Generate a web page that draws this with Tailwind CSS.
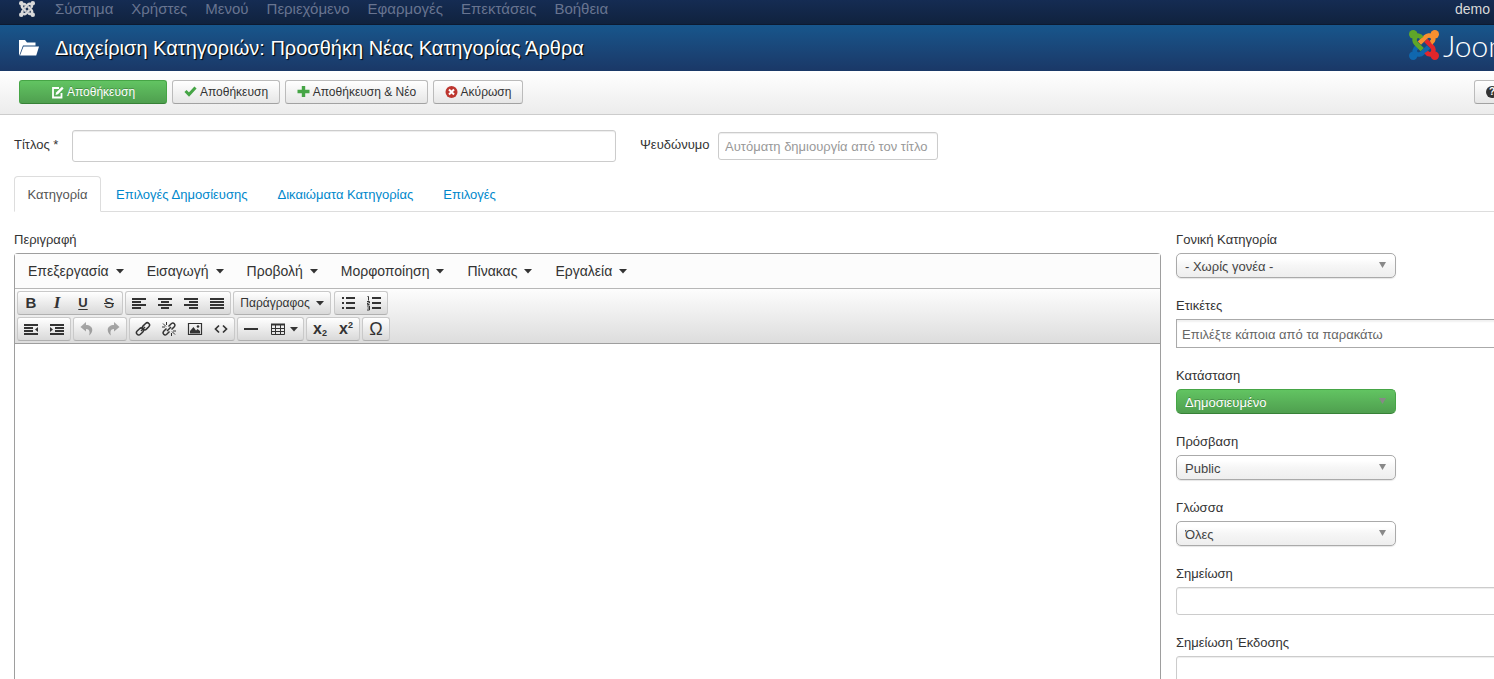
<!DOCTYPE html>
<html lang="el">
<head>
<meta charset="utf-8">
<meta name="viewport" content="width=device-width, initial-scale=1">
<title>Διαχείριση Κατηγοριών</title>
<script src="https://cdn.jsdelivr.net/npm/@tailwindcss/browser@4"></script>
</head>
<body class="min-h-screen flex flex-col overflow-hidden bg-white font-['Liberation_Sans',Arial,sans-serif] text-[13px] leading-5 text-[#333]">
<svg class="hidden" aria-hidden="true">
  <defs>
    <g id="arm"><circle cx="4.2" cy="4.2" r="4.2"/><path d="M12.800 8C11 5.200 8 5 6.400 7C5 9 5.400 11.800 7 13.400L13.200 19.600" fill="none" stroke="currentColor" stroke-width="4.600"/></g>
    <path id="caret" d="M0 0h8L4 4.500z" fill="#333"/>
    <path id="down" d="M0 0h7L3.500 6z" fill="#888"/>
  </defs>
</svg>

<nav class="flex h-[25px] shrink-0 items-start border-b border-[#0d1a30] bg-linear-to-b from-[#152c53] to-[#10223e] pl-[19px] pr-1 text-[15px] leading-[18px] text-[#687490]">
  <a href="#" aria-label="Joomla" class="mr-5 pt-px"><svg class="size-4 text-[#d9d9d9]" viewBox="0 0 30 30" fill="currentColor"><use href="#arm"/><use href="#arm" transform="rotate(90 15 15)"/><use href="#arm" transform="rotate(180 15 15)"/><use href="#arm" transform="rotate(270 15 15)"/></svg></a>
  <div class="flex gap-[18px]">
    <a href="#">Σύστημα</a><a href="#">Χρήστες</a><a href="#">Μενού</a><a href="#">Περιεχόμενο</a><a href="#">Εφαρμογές</a><a href="#">Επεκτάσεις</a><a href="#">Βοήθεια</a>
  </div>
  <a href="#" class="ml-auto text-[14px] text-[#d9d9d9]">demo</a>
</nav>

<header class="flex h-[46px] shrink-0 items-center bg-linear-to-b from-[#17568c] to-[#1a3867] pl-[19px] text-white">
  <svg class="mr-4 h-[17px] w-5" viewBox="0 0 20 17" fill="#fff"><path d="M0 0h6l2 2.500h8.500V5.500H4L1.200 13 0 16z"/><path d="M4.500 6.500H20L17.200 15.500H1z"/></svg>
  <h1 class="text-[20px] leading-6 [text-shadow:1px_1px_1px_#000]">Διαχείριση Κατηγοριών: Προσθήκη Νέας Κατηγορίας Άρθρα</h1>
  <a href="#" class="ml-auto flex w-[85px] items-center overflow-hidden pb-1.5" aria-label="Joomla!">
    <svg class="mr-1 size-[30px] shrink-0" viewBox="0 0 30 30">
      <g class="text-[#1067ae]" fill="currentColor" transform="rotate(270 15 15)"><use href="#arm"/></g>
      <g class="text-[#e3262b]" fill="currentColor" transform="rotate(180 15 15)"><use href="#arm"/></g>
      <g class="text-[#f9902f]" fill="currentColor" transform="rotate(90 15 15)"><use href="#arm"/></g>
      <g class="text-[#5fa629]" fill="currentColor"><use href="#arm"/></g>
    </svg>
    <span class="font-['Lato',sans-serif] text-[30px] leading-7 font-light">Joomla!</span>
  </a>
</header>

<div class="flex h-11 shrink-0 items-start gap-[5px] overflow-hidden border-b border-[#ccc] bg-linear-to-b from-white to-[#ececec] pt-[9px] pl-[19px] text-[12px]">
  <button class="flex h-6 w-[148px] items-center justify-center gap-[3px] rounded-[3px] border border-[#46a546] border-b-[#378137] bg-linear-to-b from-[#62c462] to-[#4f9f4f] text-white [text-shadow:0_-1px_0_rgba(0,0,0,.25)]"><svg class="size-[13px]" viewBox="0 0 13 13" fill="none" stroke="#fff" stroke-width="1.800"><path d="M8 2H2v9.500h8.500V7"/><path d="M4.500 9l.6-2.500L11 .8 12.600 2.400 7 8.200z" fill="#fff" stroke="none"/></svg>Αποθήκευση</button>
  <button class="flex h-6 w-[108px] items-center justify-center gap-[3px] rounded-[3px] border border-[#bbb] border-b-[#a2a2a2] bg-linear-to-b from-white to-[#e6e6e6]"><svg class="size-[13px]" viewBox="0 0 13 13" fill="none" stroke="#46a546" stroke-width="3"><path d="M1.500 5l3.500 3.500 6.500-7"/></svg>Αποθήκευση</button>
  <button class="flex h-6 w-[143px] items-center justify-center gap-[3px] rounded-[3px] border border-[#bbb] border-b-[#a2a2a2] bg-linear-to-b from-white to-[#e6e6e6]"><svg class="size-[13px]" viewBox="0 0 13 13" stroke="#46a546" stroke-width="3.400"><path d="M6.500 0v11M.5 5.500h12"/></svg>Αποθήκευση &amp; Νέο</button>
  <button class="flex h-6 w-[90px] items-center justify-center gap-[3px] rounded-[3px] border border-[#bbb] border-b-[#a2a2a2] bg-linear-to-b from-white to-[#e6e6e6]"><svg class="size-[13px]" viewBox="0 0 13 13"><circle cx="6.500" cy="6" r="6" fill="#bd362f"/><path d="M4 3.500l5 5M9 3.500l-5 5" stroke="#fff" stroke-width="2"/></svg>Ακύρωση</button>
  <button class="-mr-10 ml-auto flex h-6 w-[60px] items-center rounded-[3px] border border-[#bbb] border-b-[#a2a2a2] bg-linear-to-b from-white to-[#e6e6e6] pl-[11px]" aria-label="Βοήθεια"><span class="flex size-3 items-center justify-center rounded-full bg-[#333] text-[10px] leading-3 font-bold text-white">?</span></button>
</div>

<main class="flex grow flex-col px-[14px]">
  <div class="flex items-center pt-[15px]">
    <label for="title" class="w-[58px] pb-0.5">Τίτλος *</label>
    <input id="title" class="h-8 w-[544px] rounded-[3px] border border-[#ccc] px-2 shadow-[inset_0_1px_1px_rgba(0,0,0,.075)]">
    <label for="alias" class="ml-6 w-[78px] pb-0.5">Ψευδώνυμο</label>
    <input id="alias" placeholder="Αυτόματη δημιουργία από τον τίτλο" class="h-7 w-[220px] rounded-[3px] border border-[#ccc] px-1.5 shadow-[inset_0_1px_1px_rgba(0,0,0,.075)] placeholder:text-[#999]">
  </div>

  <div class="-mr-[14px] mt-[14px] flex h-9 shrink-0 border-b border-[#ddd] text-[#0088cc]" role="tablist">
    <button role="tab" aria-selected="true" class="-mb-px w-[87px] rounded-t border border-[#ddd] border-b-white bg-white pt-0.5 text-[#555]">Κατηγορία</button>
    <button role="tab" class="ml-[15px] pt-0.5">Επιλογές Δημοσίευσης</button>
    <button role="tab" class="ml-[30px] pt-0.5">Δικαιώματα Κατηγορίας</button>
    <button role="tab" class="ml-[30px] pt-0.5">Επιλογές</button>
  </div>

  <div class="flex grow gap-[15px] pt-[18px]">
    <section class="flex min-w-0 grow flex-col">
      <label for="editor" class="mb-[3px]">Περιγραφή</label>
      <div class="flex grow flex-col border border-b-0 border-[#9e9e9e] rounded-t-sm">
        <div class="flex h-[35px] items-center gap-[23px] border-b border-[#b7b7b7] bg-[#fcfcfc] pl-[13px] text-[14px]">
          <button class="flex items-center gap-[7px]">Επεξεργασία<svg class="h-[5px] w-2"><use href="#caret"/></svg></button>
          <button class="flex items-center gap-[7px]">Εισαγωγή<svg class="h-[5px] w-2"><use href="#caret"/></svg></button>
          <button class="flex items-center gap-[7px]">Προβολή<svg class="h-[5px] w-2"><use href="#caret"/></svg></button>
          <button class="flex items-center gap-[7px]">Μορφοποίηση<svg class="h-[5px] w-2"><use href="#caret"/></svg></button>
          <button class="flex items-center gap-[7px]">Πίνακας<svg class="h-[5px] w-2"><use href="#caret"/></svg></button>
          <button class="flex items-center gap-[7px]">Εργαλεία<svg class="h-[5px] w-2"><use href="#caret"/></svg></button>
        </div>
        <div class="flex h-[55px] flex-col gap-0.5 border-b border-[#9e9e9e] bg-linear-to-b from-[#fdfdfd] to-[#ddd] pt-0.5 pl-0.5 [&>div]:flex [&>div]:gap-0.5 [&>div>div]:flex [&>div>div]:h-6 [&>div>div]:rounded-[3px] [&>div>div]:border [&>div>div]:border-[#c9c9c9] [&>div>div]:border-b-[#b0b0b0] [&>div>div]:bg-linear-to-b [&>div>div]:from-white [&>div>div]:to-[#d9d9d9] [&_button]:flex [&_button]:w-[26px] [&_button]:items-center [&_button]:justify-center [&_svg]:size-4 [&_svg]:fill-none [&_svg]:stroke-[#333]">
          <div>
            <div>
              <button aria-label="Έντονα" class="text-[15px] font-bold">B</button>
              <button aria-label="Πλάγια" class="font-['Liberation_Serif',serif] text-[17px] font-bold italic">I</button>
              <button aria-label="Υπογράμμιση" class="text-[13px] font-bold underline underline-offset-2">U</button>
              <button aria-label="Διαγράμμιση" class="text-[15px] line-through">S</button>
            </div>
            <div>
              <button aria-label="Αριστερά"><svg viewBox="0 0 16 16" stroke-width="2"><path d="M1 4h14M1 7h9M1 10h14M1 13h9"/></svg></button>
              <button aria-label="Κέντρο"><svg viewBox="0 0 16 16" stroke-width="2"><path d="M1 4h14M4 7h8M1 10h14M4 13h8"/></svg></button>
              <button aria-label="Δεξιά"><svg viewBox="0 0 16 16" stroke-width="2"><path d="M1 4h14M6 7h9M1 10h14M6 13h9"/></svg></button>
              <button aria-label="Πλήρης"><svg viewBox="0 0 16 16" stroke-width="2"><path d="M1 4h14M1 7h14M1 10h14M1 13h14"/></svg></button>
            </div>
            <div class="mr-px">
              <button class="w-24! gap-1.5 text-[12px]">Παράγραφος<svg class="h-[5px]! w-2! stroke-none!"><use href="#caret"/></svg></button>
            </div>
            <div>
              <button aria-label="Κουκκίδες"><svg viewBox="0 0 16 16" stroke-width="2"><path d="M2 3h2M6 3h9M2 8h2M6 8h9M2 13h2M6 13h9"/></svg></button>
              <button aria-label="Αρίθμηση"><svg viewBox="0 0 16 16" stroke-width="2"><path d="M6 3h9M6 8h9M6 13h9"/><path d="M1.500 1.500h1v4M1 6.500h2.500v1.500H1.500v1.500h2M1 11h2.500v4H1M1.500 13h2" stroke-width="1"/></svg></button>
            </div>
          </div>
          <div>
            <div>
              <button aria-label="Μείωση εσοχής"><svg viewBox="0 0 16 16" stroke-width="2"><path d="M1 4h14M1 7h9M1 10h9M1 13h14"/><path d="M15 6v5l-3-2.500z" fill="#333" stroke="none"/></svg></button>
              <button aria-label="Αύξηση εσοχής"><svg viewBox="0 0 16 16" stroke-width="2"><path d="M1 4h14M6 7h9M6 10h9M1 13h14"/><path d="M1 6v5l3-2.500z" fill="#333" stroke="none"/></svg></button>
            </div>
            <div>
              <button disabled aria-label="Αναίρεση"><svg class="opacity-40" viewBox="0 0 16 16"><path d="M7 1L1.500 6 7 10.500V8c3 0 4.500 2 3 6.500 6-5 3-10.500-3-10.500z" fill="#333" stroke="none"/></svg></button>
              <button disabled aria-label="Επανάληψη"><svg class="opacity-40" viewBox="0 0 16 16"><path d="M9 1l5.500 5L9 10.500V8c-3 0-4.500 2-3 6.500C0 9.500 3 4 9 4z" fill="#333" stroke="none"/></svg></button>
            </div>
            <div>
              <button aria-label="Σύνδεσμος"><svg viewBox="0 0 16 16" stroke-width="1.500"><rect x="7" y="3" width="8" height="4.600" rx="2.300" transform="rotate(-45 11 5.300)"/><rect x="1" y="8.200" width="8" height="4.600" rx="2.300" transform="rotate(-45 5 10.500)"/><path d="M6 10l4-4"/></svg></button>
              <button aria-label="Αφαίρεση συνδέσμου"><svg viewBox="0 0 16 16" stroke-width="1.500"><path d="M7.500 5.500l3-3c2-1.500 4.500 1 3 3l-3 3M8.500 10.500l-3 3c-2 1.500-4.500-1-3-3l3-3M6 10l4-4"/><path d="M2 2.500l3 3M5.500 1v3M1 6h3M11 10.500l3 3M10.500 12v3M12 10h3" stroke-width="1"/></svg></button>
              <button aria-label="Εικόνα"><svg viewBox="0 0 16 16" stroke-width="1.200"><path d="M1.500 2.500h13v11h-13z"/><path d="M3 12.500V10l3.500-4L9 9.500l1.500-1.500L13 10v2.500z" fill="#333" stroke="none"/><circle cx="11" cy="5.500" r="1.300" fill="#333" stroke="none"/></svg></button>
              <button aria-label="Κώδικας"><svg viewBox="0 0 16 16" stroke-width="1.700"><path d="M6 4.500L2.500 8 6 11.500M10 4.500L13.500 8 10 11.500"/></svg></button>
            </div>
            <div>
              <button aria-label="Γραμμή"><svg viewBox="0 0 16 16" stroke-width="2"><path d="M1 8h14"/></svg></button>
              <button aria-label="Πίνακας" class="w-[39px]! gap-1"><svg viewBox="0 0 16 16" stroke-width="1"><path d="M1.500 3.500h13v10h-13zM1.500 7.500h13M1.500 10.500h13M5.500 3v11M10.500 3v11"/><path d="M1 3.500h14" stroke-width="2"/></svg><svg class="h-[5px]! w-2! stroke-none!"><use href="#caret"/></svg></button>
            </div>
            <div>
              <button aria-label="Δείκτης" class="text-[16px] leading-4"><span class="font-bold">x</span><span class="pt-2 text-[9px] font-bold">2</span></button>
              <button aria-label="Εκθέτης" class="text-[16px] leading-4"><span class="font-bold">x</span><span class="pb-2 text-[9px] font-bold">2</span></button>
            </div>
            <div><button aria-label="Ειδικός χαρακτήρας" class="text-[18px]">Ω</button></div>
          </div>
        </div>
        <textarea id="editor" class="min-h-[200px] w-full grow resize-none p-2 outline-none"></textarea>
      </div>
    </section>

    <aside class="flex w-[304px] shrink-0 flex-col [&_label]:mb-[3px] [&_label]:block">
      <div class="mb-[18px]">
        <label for="parent">Γονική Κατηγορία</label>
        <div class="relative w-[220px]"><select id="parent" class="block h-[25px] w-full appearance-none rounded-[5px] border border-[#aaa] bg-linear-to-b from-white from-20% via-[#f6f6f6] via-50% to-[#eee] px-2 pt-0.5 text-[#444] shadow-[0_1px_1px_rgba(0,0,0,.1)]"><option>- Χωρίς γονέα -</option></select><svg class="pointer-events-none absolute top-[9px] right-2.5 h-1.5 w-[7px]"><use href="#down"/></svg></div>
      </div>
      <div class="-mr-10 mb-[18px]">
        <label for="tags">Ετικέτες</label>
        <input id="tags" placeholder="Επιλέξτε κάποια από τα παρακάτω" class="block h-[29px] w-full border border-[#aaa] px-[5px] pt-0.5 shadow-[inset_0_2px_2px_rgba(0,0,0,.06)] placeholder:text-[#666]">
      </div>
      <div class="mb-[18px]">
        <label for="state">Κατάσταση</label>
        <div class="relative w-[220px]"><select id="state" class="block h-[25px] w-full appearance-none rounded-[5px] border border-[#46a546] border-b-[#378137] bg-linear-to-b from-[#62c462] to-[#4f9f4f] px-2 pt-0.5 text-white [text-shadow:0_-1px_0_rgba(0,0,0,.25)]"><option>Δημοσιευμένο</option></select><svg class="pointer-events-none absolute top-[9px] right-2.5 h-1.5 w-[7px]"><use href="#down"/></svg></div>
      </div>
      <div class="mb-[18px]">
        <label for="access">Πρόσβαση</label>
        <div class="relative w-[220px]"><select id="access" class="block h-[25px] w-full appearance-none rounded-[5px] border border-[#aaa] bg-linear-to-b from-white from-20% via-[#f6f6f6] via-50% to-[#eee] px-2 pt-0.5 text-[#444] shadow-[0_1px_1px_rgba(0,0,0,.1)]"><option>Public</option></select><svg class="pointer-events-none absolute top-[9px] right-2.5 h-1.5 w-[7px]"><use href="#down"/></svg></div>
      </div>
      <div class="mb-[18px]">
        <label for="lang">Γλώσσα</label>
        <div class="relative w-[220px]"><select id="lang" class="block h-[25px] w-full appearance-none rounded-[5px] border border-[#aaa] bg-linear-to-b from-white from-20% via-[#f6f6f6] via-50% to-[#eee] px-2 pt-0.5 text-[#444] shadow-[0_1px_1px_rgba(0,0,0,.1)]"><option>Όλες</option></select><svg class="pointer-events-none absolute top-[9px] right-2.5 h-1.5 w-[7px]"><use href="#down"/></svg></div>
      </div>
      <div class="-mr-10 mb-[18px]">
        <label for="note">Σημείωση</label>
        <input id="note" class="block h-7 w-full rounded-[3px] border border-[#ccc] px-1.5 shadow-[inset_0_1px_1px_rgba(0,0,0,.075)]">
      </div>
      <div class="-mr-10 -mb-2">
        <label for="version">Σημείωση Έκδοσης</label>
        <input id="version" class="block h-7 w-full rounded-[3px] border border-[#ccc] px-1.5 shadow-[inset_0_1px_1px_rgba(0,0,0,.075)]">
      </div>
    </aside>
  </div>
</main>
</body>
</html>
